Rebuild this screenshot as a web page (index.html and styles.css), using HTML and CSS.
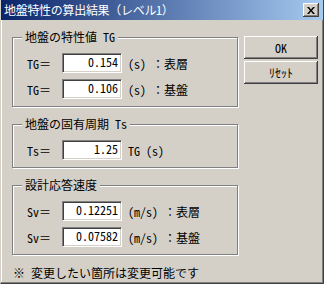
FILE: index.html
```html
<!DOCTYPE html>
<html lang="ja">
<head>
    <meta charset="UTF-8">
    <title>地盤特性の算出結果(レベル1)</title>
    <link rel="stylesheet" href="styles.css">
</head>
<body>
    <div class="window">
        <div class="titlebar">
            <span class="title">地盤特性の算出結果<span class="fw">（</span>レベル1<span class="fw">）</span></span>
            <span class="close">
                <svg width="8" height="7" viewBox="0 0 8 7">
                    <path d="M0 0h2l2 2.5 2-2.5h2l-3 3.5 3 3.5h-2l-2-2.5-2 2.5h-2l3-3.5z" fill="#000"/>
                </svg>
            </span>
        </div>

        <div class="content">
            <div class="groups">
                <fieldset class="group">
                    <legend>地盤の特性値 TG</legend>
                    <div class="rows">
                        <div class="row"><span class="lbl">TG<span class="fw">＝</span></span><span class="field">0.154</span><span class="unit"> (s) <span class="fw">：</span>表層</span></div>
                        <div class="row"><span class="lbl">TG<span class="fw">＝</span></span><span class="field">0.106</span><span class="unit"> (s) <span class="fw">：</span>基盤</span></div>
                    </div>
                </fieldset>

                <fieldset class="group">
                    <legend>地盤の固有周期 Ts</legend>
                    <div class="rows">
                        <div class="row"><span class="lbl">Ts<span class="fw">＝</span></span><span class="field">1.25</span><span class="unit"> TG (s)</span></div>
                    </div>
                </fieldset>

                <fieldset class="group">
                    <legend>設計応答速度</legend>
                    <div class="rows">
                        <div class="row"><span class="lbl">Sv<span class="fw">＝</span></span><span class="field">0.12251</span><span class="unit"> (m/s) <span class="fw">：</span>表層</span></div>
                        <div class="row"><span class="lbl">Sv<span class="fw">＝</span></span><span class="field">0.07582</span><span class="unit"> (m/s) <span class="fw">：</span>基盤</span></div>
                    </div>
                </fieldset>

                <p class="note"><span class="fw">※</span> 変更したい箇所は変更可能です</p>
            </div>

            <div class="buttons">
                <button type="button">OK</button>
                <button type="button">ﾘｾｯﾄ</button>
            </div>
        </div>
    </div>
</body>
</html>
```

FILE: styles.css
```css
body {
    margin: 0;
    background-color: #d4d0c8;
}
.window {
    width: 324px;
    height: 284px;
    box-sizing: border-box;
    background-color: #d4d0c8;
    border-left: 1px solid #d4d0c8;
    border-right: 1px solid #404040;
    border-bottom: 1px solid #404040;
    box-shadow: inset -1px -1px #808080, inset 1px 0 #fff;
    font-family: "Noto Sans CJK JP", sans-serif;
    font-size: 12px;
    font-feature-settings: "hwid";
    color: #000;
}
/* full-width forms for = : ( ) */
.fw {
    font-feature-settings: normal;
}
.titlebar {
    display: flex;
    align-items: center;
    justify-content: space-between;
    height: 20px;
    padding: 0 4px 0 3px;
    background: linear-gradient(to right, #0a246a, #a6caf0);
    color: #fff;
}
.title {
    font-size: 12px;
    line-height: 20px;
    letter-spacing: -0.3px;
}
.close {
    width: 16px;
    height: 14px;
    box-sizing: border-box;
    background-color: #d4d0c8;
    box-shadow: inset -1px -1px #404040, inset 1px 1px #fff, inset -2px -2px #808080;
    display: flex;
    align-items: center;
    justify-content: center;
}
.content {
    display: flex;
    gap: 5px;
    padding: 10px 0 0 11px;
}
.groups {
    width: 227px;
}
.group {
    margin: 0 0 10px 0;
    padding: 9px 0 7px 14px;
    width: 226px;
    box-sizing: border-box;
    min-width: 0;
    border: 1px solid #808080;
    box-shadow: inset 1px 1px #fff, 1px 1px #fff;
}
.group legend {
    margin-left: -5px;
    padding: 0 3px;
    line-height: 14px;
    background-color: #d4d0c8;
}
.row {
    display: flex;
    align-items: center;
    height: 20px;
}
.row + .row {
    margin-top: 6px;
}
.lbl {
    width: 35px;
}
.field {
    width: 60px;
    height: 20px;
    box-sizing: border-box;
    padding-right: 3px;
    text-align: right;
    line-height: 16px;
    background-color: #fff;
    border-top: 1px solid #808080;
    border-left: 1px solid #808080;
    border-right: 1px solid #fff;
    border-bottom: 1px solid #fff;
    box-shadow: inset 1px 1px #404040, inset -1px -1px #d4d0c8;
}
.unit {
    white-space: pre;
}
.note {
    margin: 5px 0 0 1px;
    line-height: 16px;
    white-space: pre;
}
.buttons {
    display: flex;
    flex-direction: column;
    gap: 2px;
    padding-top: 6px;
}
.buttons button {
    width: 74px;
    height: 23px;
    padding: 0;
    border: none;
    background-color: #d4d0c8;
    box-shadow: inset -1px -1px #404040, inset 1px 1px #fff, inset -2px -2px #808080;
    font-family: inherit;
    font-size: 12px;
    font-feature-settings: "hwid";
    color: #000;
}
```
